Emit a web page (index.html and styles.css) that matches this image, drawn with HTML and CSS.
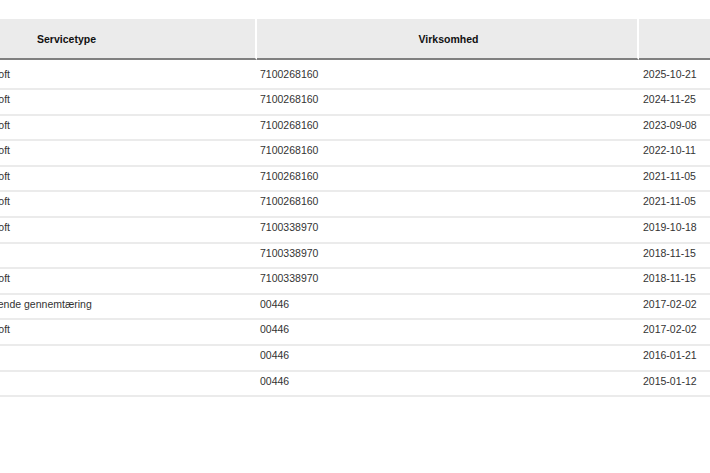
FILE: index.html
```html
<!DOCTYPE html>
<html lang="da">
<head>
<meta charset="utf-8">
<title>Servicehistorik</title>
<link rel="stylesheet" href="styles.css">
</head>
<body>
<div class="wrap">
<table class="history">
  <colgroup>
    <col class="c1"><col class="c2"><col class="c3">
  </colgroup>
  <thead>
    <tr><th>Servicetype</th><th>Virksomhed</th><th class="last"></th></tr>
  </thead>
  <tbody>
    <tr class="first"><td class="type">Årligt serviceeftersyn på loft</td><td>7100268160</td><td class="date">2025-10-21</td></tr>
    <tr><td class="type">Årligt serviceeftersyn på loft</td><td>7100268160</td><td class="date">2024-11-25</td></tr>
    <tr><td class="type">Årligt serviceeftersyn på loft</td><td>7100268160</td><td class="date">2023-09-08</td></tr>
    <tr><td class="type">Årligt serviceeftersyn på loft</td><td>7100268160</td><td class="date">2022-10-11</td></tr>
    <tr><td class="type">Årligt serviceeftersyn på loft</td><td>7100268160</td><td class="date">2021-11-05</td></tr>
    <tr><td class="type">Årligt serviceeftersyn på loft</td><td>7100268160</td><td class="date">2021-11-05</td></tr>
    <tr><td class="type">Årligt serviceeftersyn på loft</td><td>7100338970</td><td class="date">2019-10-18</td></tr>
    <tr><td class="type"></td><td>7100338970</td><td class="date">2018-11-15</td></tr>
    <tr><td class="type">Årligt serviceeftersyn på loft</td><td>7100338970</td><td class="date">2018-11-15</td></tr>
    <tr><td class="type">Udbedring af tilbagevendende gennemtæring</td><td>00446</td><td class="date">2017-02-02</td></tr>
    <tr><td class="type">Årligt serviceeftersyn på loft</td><td>00446</td><td class="date">2017-02-02</td></tr>
    <tr><td class="type"></td><td>00446</td><td class="date">2016-01-21</td></tr>
    <tr><td class="type"></td><td>00446</td><td class="date">2015-01-12</td></tr>
  </tbody>
</table>
</div>
</body>
</html>
```

FILE: styles.css
```css
html, body {
  margin: 0;
  padding: 0;
  background: #ffffff;
  overflow: hidden;
}

.wrap {
  margin-top: 19px;
  margin-left: -125px;
  width: 1000px;
}

.history {
  border-collapse: separate;
  border-spacing: 0;
  table-layout: fixed;
  width: 964px;
  font-family: "Liberation Sans", Arial, sans-serif;
  font-size: 10.5px;
  color: #333333;
}

.c1 { width: 382px; }
.c2 { width: 382px; }
.c3 { width: 200px; }

.history th {
  height: 39px;
  padding: 0 0 0 3px;
  background: #ebebeb;
  color: #111111;
  font-weight: bold;
  text-align: center;
  vertical-align: middle;
  border-right: 2px solid #ffffff;
  border-bottom: 2px solid #808080;
}

.history th.last {
  border-right: 0;
}

.history td {
  padding: 3px 2px 7.6px 3px;
  line-height: 13px;
  white-space: nowrap;
  overflow: hidden;
  border-bottom: 2px solid #ebebeb;
  vertical-align: top;
}

.history td.type {
  padding-left: 6px;
}

.history td.date {
  padding-left: 4px;
}

.history tr.first td {
  padding-top: 8px;
  padding-bottom: 7px;
}
```
